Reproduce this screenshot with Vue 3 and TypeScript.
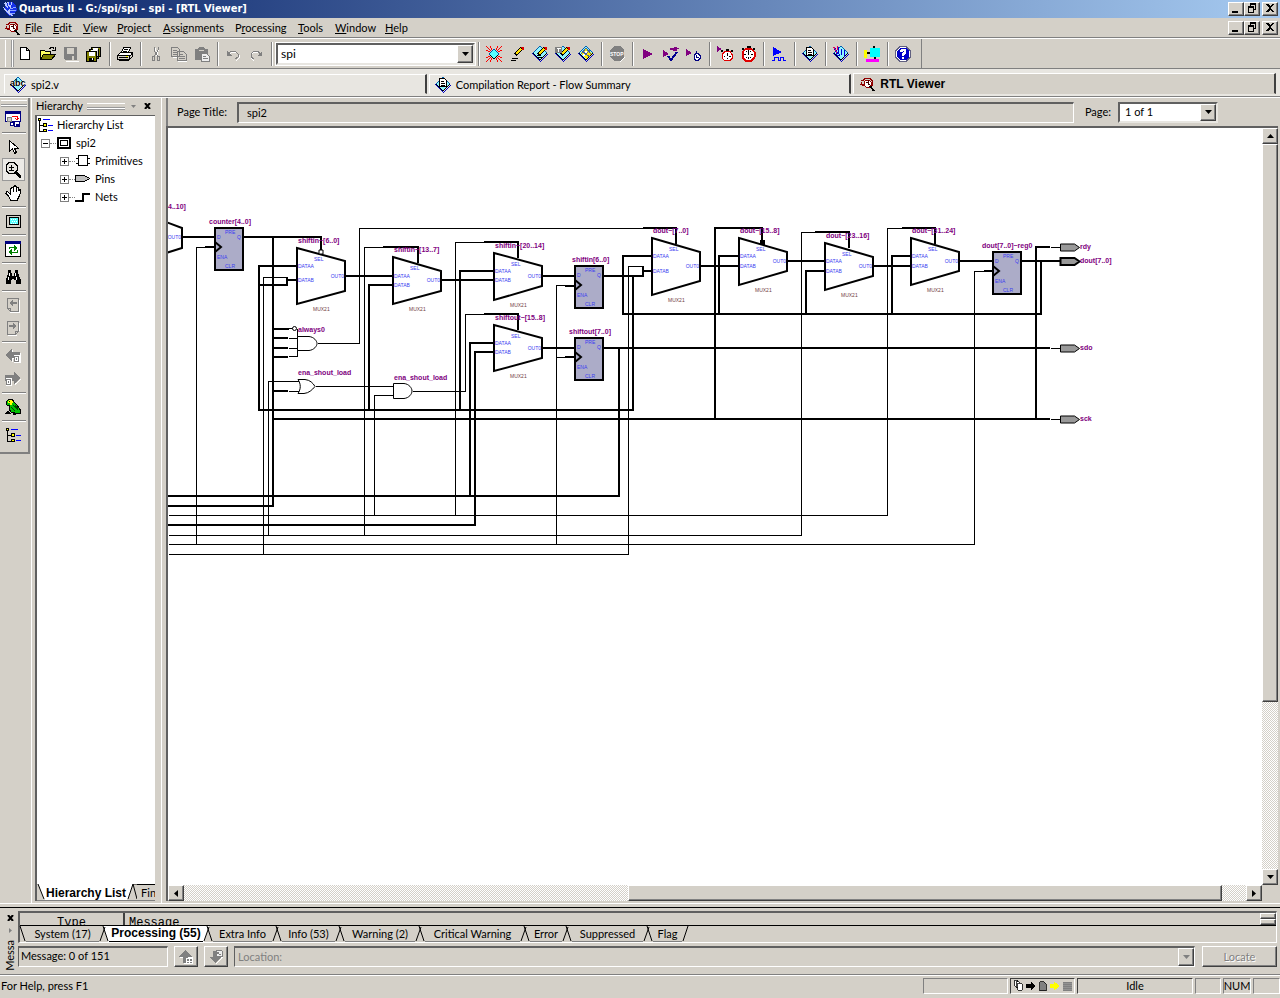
<script setup lang="ts">
import { defineComponent, h, ref } from 'vue'

type Stroke = { d: string; f?: string; s?: string; w?: number }
type Glyph = { t: string; x: number; y: number; z: number; c: string }
type Shape = Stroke | Glyph

const chip: Shape[] = [
  { d: 'M0 8L8 16L16 8V7L8 15L0 7Z', f: '#0000c0' },
  { d: 'M8 0L15 7L8 14L1 7Z', f: '#8ff4ff', s: '#0060b0' },
  { d: 'M1 7L8 14L15 7', s: '#000' },
]
const pencil: Shape[] = [
  { d: 'M6 9L13 2', s: '#000', w: 4 },
  { d: 'M7 8L12 3', s: '#ffe000', w: 2 },
  { d: 'M12 1h3v3h-2v-2h-1z', f: '#e00000' },
]
const stopwatch: Shape[] = [
  { d: 'M7 0h4v2h-4zM2 2h2v2h-2zM13 2h2v2h-2z', f: '#000' },
  { d: 'M6 2.500h5L14.500 6v5L11 15H6L2.500 11V6Z', f: '#fff', s: '#e00000', w: 2 },
  { d: 'M8 4h1v5h-1zM8 11h1v2h-1zM4 8h2v1h-2zM11 8h2v1h-2zM6 5h1v1h-1zM10 5h1v1h-1zM6 11h1v1h-1zM10 11h1v1h-1z', f: '#000' },
]
const lens: Shape[] = [
  { d: 'M2 4.500h2l2-2h5l2.500 2.500v4L11 11H7L5 9H3', s: '#900000' },
  { d: 'M5 6l2-2h3l2 2v3l-2 2H7L5 9z', f: '#fff', s: '#900000' },
  { d: 'M7 6.500h2v2h2M9.500 4v2', s: '#400' },
  { d: 'M11 10l4 5', s: '#000', w: 2 },
  { d: 'M3 6l-1 2h3', s: '#900000' },
]
const treeGlyph: Shape[] = [
  { d: 'M2.500 4v10.500H6M2.500 8.500H6', s: '#000' },
  { d: 'M1.500 1.500h2v2h-2zM6.500 6.500h3v3h-3zM6.500 12.500h3v2h-3z', f: '#ff0', s: '#000' },
  { d: 'M6 2.500h7M11 8.500h5M11 13.500h5', s: '#00f' },
]

const icons: Record<string, Shape[]> = {
  logo: [
    { d: 'M3 2l3-1h4l4 4 1 4-3 4-4 2-3-2-2-6z', f: '#1530e8' },
    { d: 'M2 2l2-1 2 5-1 1zM5 1l2 0 1 5h-1zM9 1l1 0-1 6h-1zM1 6l4 4 3-2v4l3 3-4-1-3-3z', f: '#b9c9ff' },
    { d: 'M8 8l6-2M8 10l6-1M8 12l5 1', s: '#8ea6ff' },
  ],
  lens,
  new: [{ d: 'M3.500 1.500h6l3 3v9h-9zM9.500 1.500v3h3', f: '#fff', s: '#000' }],
  open: [
    { d: 'M.5 13.500v-9h4l1 1h5v3', f: '#ffff60', s: '#000' },
    { d: 'M.5 13.500l3-5h12l-4 5z', f: '#808000', s: '#000' },
    { d: 'M9 2.500h1l1-1h2l1.500 2M12 4h3v-3', s: '#000' },
  ],
  save: [
    { d: 'M3 15h13v-12', s: '#fff' },
    { d: 'M1 1h13v13H2l-1-1z', f: '#808080' },
    { d: 'M4 2h7v6H4zM9 10h2v4H9z', f: '#d4d0c8' },
  ],
  saveall: [
    { d: 'M5.500 1.500h9v9h-9zM3.500 3.500h9v9h-9z', f: '#808000', s: '#000' },
    { d: 'M7 2h5v2H7zM5 4h6v2H5z', f: '#fff' },
    { d: 'M.5 5.500h10v10h-10z', f: '#808000', s: '#000' },
    { d: 'M3 6h6v4H3zM7 12h1v2H7z', f: '#fff' },
    { d: 'M3 12h5v3H3z', f: '#000' },
    { d: 'M6 12h1v2H6z', f: '#fff' },
  ],
  print: [
    { d: 'M4.500 6.500l2-5h7l-2 5z', f: '#fff', s: '#000' },
    { d: 'M7 3.500h4M6 5.500h4', s: '#000' },
    { d: 'M.5 9.500l3-3h12l-2 3z', f: '#fff', s: '#000' },
    { d: 'M.5 9.500h12v4h-12zM12.500 13.500l3-3v-4', f: '#d4d0c8', s: '#000' },
    { d: 'M2 11h9v1H2zM2 14h10v1H2z', f: '#000' },
    { d: 'M9 10h2v1H9z', f: '#ff0' },
  ],
  cut: [
    { d: 'M7 2l3 8M11 2l-3 8', s: '#fff' },
    { d: 'M6 1v3l4 7M10 1v3l-4 7', s: '#808080' },
    { d: 'M4.500 10.500h2v4h-2zM9.500 10.500h2v4h-2z', s: '#808080' },
  ],
  copy: [
    { d: 'M2 11.500h6M16 6v9.500H7', s: '#fff' },
    { d: 'M.5 1.500h6l2 2v7h-8zM6.500 5.500h6l3 3v6h-9z', f: '#d4d0c8', s: '#808080' },
    { d: 'M2 4.500h4M2 6.500h4M2 8.500h4M8 8.500h4M8 10.500h6M8 12.500h6', s: '#808080' },
  ],
  paste: [
    { d: 'M1 3h3l1-2h5l1 2h3v11H1z', f: '#808080' },
    { d: 'M5 4.500h5', s: '#d4d0c8' },
    { d: 'M7.500 7.500h5l3 3v5h-8z', f: '#eee', s: '#808080' },
    { d: 'M9 10.500h3M9 12.500h5', s: '#808080' },
  ],
  undo: [
    { d: 'M4 9l3-3h4l3 3v3l-3 3', s: '#fff' },
    { d: 'M3 8l3-3h4l3 3v3l-3 2', s: '#808080' },
    { d: 'M2 5v5h5z', f: '#808080' },
  ],
  redo: [
    { d: 'M13 9l-3-3H6L3 9v3l3 3', s: '#fff' },
    { d: 'M12 8l-2-3H6L3 8v3l3 2', s: '#808080' },
    { d: 'M14 5v5H9z', f: '#808080' },
  ],
  assign: [
    { d: 'M0 0l5 5M16 0l-5 5M0 16l5-5M16 16l-5-5M0 4l4 2M4 0l2 4M16 4l-4 2M12 0l-2 4M0 12l4-2M4 16l2-4M16 12l-4-2M12 16l-2-4', s: '#f00' },
    { d: 'M8 3l5 5-5 5-5-5z', f: '#5ff', s: '#0050a0' },
    { d: 'M4 9l4 4 4-4', s: '#000' },
  ],
  edit: [...pencil, { d: 'M3 12.500h6M2 14.500h5', s: '#000' }],
  chipedit: [...chip, { d: 'M5 9.500h4M5 11.500h6', s: '#000' }, ...pencil],
  chippin: [...chip, ...pencil, { d: 'M0 1h7v6H0z', f: '#808080' }, { d: 'M2 2h4v1H4v3H3V3H2z', f: '#fff' }],
  floor: [
    ...chip,
    { d: 'M8 2L14 7L8 13L2 7Z', f: '#ffe800' },
    { d: 'M4 5l8 6M6 10l6-6M8 2l5 6M3 8l5-6', s: '#4060a0' },
    { d: 'M7 5h2v2H7zM5 8h2v2H5z', f: '#fff' },
  ],
  stop: [
    { d: 'M6 16h5l5-5V6', s: '#fff' },
    { d: 'M5 0h6l4 4v7l-4 4H5l-4-4V4z', f: '#808080' },
    { t: 'STOP', x: 1, y: 10, z: 5, c: '#fff' },
  ],
  play: [{ d: 'M3 3v10l10-5z', f: '#800080' }],
  playcheck: [
    { d: 'M0 4v7l6-3z', f: '#800080' },
    { d: 'M7 2h4V1h3v4h-4V4H7zM14 2h2v1h-2z', f: '#800080' },
    { d: 'M5 10l3 4 6-8', s: '#000090', w: 2 },
  ],
  playtime: [
    { d: 'M0 3v7l6-3z', f: '#800080' },
    { d: 'M10.500 5v2M10 7.500l-2 2v3l2 2h2l2-2v-3l-2-2z', f: '#fff', s: '#000080' },
    { d: 'M10.500 9v2.500h2', s: '#000080' },
  ],
  timeplay: [
    { d: 'M0 0v6l5-3z', f: '#800080' },
    { d: 'M9 3h3v2H9z', f: '#000' },
    { d: 'M8 5.500h5l2 3v4l-2 2H8l-3-2v-4z', f: '#fff', s: '#e00000' },
    { d: 'M10 7h1v3h-1zM10 12h1v1h-1zM7 10h1v1H7zM12 10h2v1h-2zM4 4h2v2H4zM14 4h2v2h-2z', f: '#000' },
  ],
  stopwatch,
  wave: [
    { d: 'M2 1v9l9-4z', f: '#00f' },
    { d: 'M1 14.500h2.500v-3h4v3h2v-3h3v3H15', s: '#00f' },
  ],
  report: [
    ...chip,
    { d: 'M4.500 1.500h5l2 2v6h-7z', f: '#fff', s: '#000' },
    { d: 'M6 4.500h3M6 6.500h4M6 8.500h4', s: '#000' },
  ],
  program: [...chip, { d: 'M1 1l3 8h3M5 1v6l2 2M8 3v6M11 4v7M2 2l3 6', s: '#0000d0' }, { d: 'M0 1h1l3 6M4 0v4', s: '#e00060' }],
  monitor: [
    { d: 'M6 2h10v9H6z', f: '#0ff' },
    { d: 'M9 0h2v2H9zM10 11h2v2h-2zM3 6h3v2H3z', f: '#000' },
    { d: 'M0 4h3v8H0z', f: '#ff0' },
    { d: 'M2 13h13v3H2z', f: '#f0f' },
  ],
  help: [
    { d: 'M5 .5h6L15.500 5v6L11 15.500H5L.5 11V5z', f: '#fff', s: '#606080' },
    { d: 'M5 2h6l3 3v6l-3 3H5l-3-3V5z', f: '#0000c8' },
    { d: 'M6 6V5h1V4h3v3H9v1H8v2M8 11v2', s: '#fff', w: 2 },
  ],
  abc: [...chip, { d: 'M1 5h14v4H1z', f: '#fff' }, { t: 'abc', x: 0, y: 9, z: 9, c: '#000' }],
  export: [
    { d: 'M.5.500h15v10H.5z', f: '#fff', s: '#000080' },
    { d: 'M0 0h16v3H0z', f: '#000080' },
    { d: 'M2.500 6.500h4v4h-4z', f: '#ccc', s: '#808080' },
    { d: 'M7 5h5v4M10 7l2 2 2-2', s: '#f00' },
    { d: 'M5.500 11.500h3v3h-3zM9.500 10.500h5v5h-5z', f: '#fff', s: '#000080' },
    { d: 'M11 13h3v2h-3z', f: '#000080' },
  ],
  arrow: [{ d: 'M4.500 1.500v11l3-3 2 5 2-1-2-4h4z', f: '#fff', s: '#000' }],
  zoom: [
    { d: 'M4 .5h5l3 3v5l-3 3H4l-3-3v-5z', f: '#e8e6e1', s: '#000' },
    { d: 'M6.500 3v5M4 5.500h5M4 8.500h5', s: '#000' },
    { d: 'M10 10l6 5', s: '#000', w: 3 },
  ],
  hand: [
    { d: 'M5.500 9V3.500l2-1 1 1v-2l2-1 1 2 2 0 0 3 2-1 .5 2-2 5-2 4h-6l-3-5-2-2 1-2z', f: '#fff', s: '#000' },
    { d: 'M8.500 3v4M11.500 3v4', s: '#000' },
  ],
  full: [
    { d: 'M1.500 2.500h14v12h-14z', f: '#d4d0c8', s: '#000' },
    { d: 'M4.500 4.500h9v7h-9z', f: '#5ff', s: '#000' },
    { d: 'M6 6h1v1H6zM8 6h1v1H8zM10 6h1v1h-1zM7 8h1v1H7zM9 8h1v1H9zM11 8h1v1h-1zM6 10h1v1H6zM8 10h1v1H8zM10 10h1v1h-1z', f: '#fff' },
  ],
  refresh: [
    { d: 'M.5.500h15v15H.5z', f: '#fff', s: '#000' },
    { d: 'M0 0h16v3H0z', f: '#000080' },
    { d: 'M4.500 8V6.500H10M12.500 9v2.500H6', s: '#008000' },
    { d: 'M9 4l4 3-4 3zM7 8l-4 3 4 3z', f: '#008000' },
  ],
  binoc: [
    { d: 'M3 1h3v3h1v3h2V4h1V1h3v3l3 7v4h-5v-4H9v-1H7v1H6v4H1v-4l2-7z', f: '#000' },
    { d: 'M4 4h1v3H4zM3 8h1v3H3zM10 4h1v3h-1zM11 8h1v3h-1z', f: '#fff' },
  ],
  prev: [
    { d: 'M5 15.500h9.500V3', s: '#fff' },
    { d: 'M2.500 1.500h11v13h-8l-3-3zM2.500 11.500h3v3', s: '#808080' },
    { d: 'M4 6l4-3v2h4v2H8v2z', f: '#808080' },
  ],
  next: [
    { d: 'M3 15.500h9M14.500 3v8', s: '#fff' },
    { d: 'M2.500 1.500h11v10l-3 3h-8zM13.500 11.500h-3v3', s: '#808080' },
    { d: 'M12 6L8 3v2H4v2h4v2z', f: '#808080' },
  ],
  back: [
    { d: 'M1 8l7-6v3h8v10h-1V11H8v3z', f: '#fff' },
    { d: 'M0 7l7-6v3h8v6H7v3z', f: '#808080' },
    { d: 'M9 7h6v8H9z', f: '#fff' },
    { d: 'M9.500 8.500h4v5h-4z', f: '#fff', s: '#808080' },
    { d: 'M11 10h1v2h-1z', f: '#808080' },
  ],
  fwd: [
    { d: 'M16 8l-6 6v-3', s: '#fff' },
    { d: 'M15 7L9 1v3H0v6h9v3z', f: '#808080' },
    { d: 'M1 7h6v8H1z', f: '#fff' },
    { d: 'M1.500 8.500h4v5h-4z', f: '#fff', s: '#808080' },
    { d: 'M3 10h1v2H3z', f: '#808080' },
  ],
  parrot: [
    { d: 'M2 2l2-2h3l2 3 3 3 2 3 2 3-1 3-2-1-3 0-4-1-2-3V6l-2 0-1-2z', f: '#00c000', s: '#000' },
    { d: 'M3 2l1-1h3l1 2-1 3H5V4H3z', f: '#ff0' },
    { d: 'M8 6l5 5M6 8l4 4M10 6l3 4', s: '#004000' },
    { d: 'M4 2h1v1H4zM0 15l3-4 3 4zM8 14h3v2H8z', f: '#000' },
  ],
  tree: treeGlyph,
  module: [
    { d: 'M2 3h12v10H2z', f: '#fff', s: '#000', w: 2 },
    { d: 'M4.500 5.500h7v5h-7z', f: '#fff', s: '#000' },
  ],
  prim: [
    { d: 'M3.500 2.500h9v10h-9z', f: '#fff', s: '#000' },
    { d: 'M1 5.500h2M1 10.500h2M13 5.500h2M13 10.500h2', s: '#000' },
  ],
  pin: [{ d: 'M.5 4.500h9l5 3-5 3h-9z', f: '#c0c0c0', s: '#000' }],
  net: [{ d: 'M0 12h8V5h7', s: '#000', w: 2 }],
  up: [
    { d: 'M8 2l7 7h-4v6H6V9H2z', f: '#fff' },
    { d: 'M7 1l7 7h-4v6H5V8H1z', f: '#808080' },
    { d: 'M8 9h7v6H8z', f: '#fff' },
    { d: 'M9 10h2v2H9zM12 10h2v2h-2zM9 13h2v1H9zM12 13h2v1h-2z', f: '#808080' },
  ],
  down: [
    { d: 'M8 15l7-7h-4V2', s: '#fff' },
    { d: 'M7 14l6-6h-3V2H5v6H1z', f: '#808080' },
    { d: 'M8 1h5l1 1v5H8z', f: '#eee', s: '#808080' },
    { d: 'M9 3h2v2H9zM11 5h2v1h-2z', f: '#808080' },
  ],
  pages: [
    { d: 'M2.500.500h4v8h-4z', f: '#fff', s: '#000' },
    { d: 'M4.500 2.500h4v8h-4z', f: '#fff', s: '#000' },
    { d: 'M6.500 4.500h4l2 2v7h-6z', f: '#fff', s: '#000' },
  ],
  go: [{ d: 'M1 5h7V2l6 6-6 6v-4H1z', f: '#000' }],
  gosmall: [{ d: 'M1 5h6V2l7 6-7 6v-4H1z', f: '#ff0' }],
  page: [{ d: 'M3.500 2.500h6l3 3v9h-9z', f: '#808080', s: '#000' }],
  part: [{ d: 'M3 3h11v11H3z', f: '#808080' }, { d: 'M2 4.500h13M2 7.500h13M2 10.500h13M2 13h13', s: '#999' }],
  min: [{ d: 'M4 10h6v2H4z', f: '#000' }],
  restore: [{ d: 'M6 2h6v7h-2V8h1V4H7v1H6zM4 5h6v7H4zM5 7v4h4V7z', f: '#000' }],
  close: [{ d: 'M4 3h2l2 2 2-2h2L9 7l3 4h-2L8 9l-2 2H4l3-4z', f: '#000' }],
}

const Icon = defineComponent({
  props: { name: { type: String, required: true } },
  setup(props) {
    return () =>
      h(
        'svg',
        { viewBox: '0 0 16 16', width: 16, height: 16, 'aria-hidden': 'true', 'shape-rendering': 'crispEdges' },
        icons[props.name].map((s) =>
          't' in s
            ? h('text', { x: s.x, y: s.y, fill: s.c, 'font-size': s.z, 'font-weight': 'bold', 'font-family': 'Liberation Sans, sans-serif' }, s.t)
            : h('path', { d: s.d, fill: s.f ?? 'none', stroke: s.s ?? 'none', 'stroke-width': s.w ?? 1, 'fill-rule': 'evenodd' }),
        ),
      )
  },
})

const menus = ['File', 'Edit', 'View', 'Project', 'Assignments', 'Processing', 'Tools', 'Window', 'Help']
const accel: Record<string, number> = { Processing: 1 }
const menuParts = menus.map((m) => {
  const i = accel[m] ?? 0
  return [m.slice(0, i), m[i], m.slice(i + 1)]
})

const fileGroups = [['new', 'open', 'save', 'saveall'], ['print'], ['cut', 'copy', 'paste'], ['undo', 'redo']]
const toolGroups = [
  ['assign', 'edit', 'chipedit', 'chippin', 'floor'],
  ['stop'],
  ['play', 'playcheck', 'playtime'],
  ['timeplay', 'stopwatch'],
  ['wave'],
  ['report'],
  ['program'],
  ['monitor'],
  ['help'],
]
const sideGroups = [['export'], ['arrow', 'zoom', 'hand'], ['full'], ['refresh'], ['binoc'], ['prev', 'next'], ['back', 'fwd'], ['parrot'], ['tree']]

const docs = [
  { icon: 'abc', label: 'spi2.v' },
  { icon: 'report', label: 'Compilation Report - Flow Summary' },
  { icon: 'lens', label: 'RTL Viewer' },
]
const activeDoc = ref(2)
const project = ref('spi')
const pageTitle = ref('spi2')

const branches = [
  { icon: 'prim', label: 'Primitives' },
  { icon: 'pin', label: 'Pins' },
  { icon: 'net', label: 'Nets' },
]

const messageTabs = ['System (17)', 'Processing (55)', 'Extra Info', 'Info (53)', 'Warning (2)', 'Critical Warning', 'Error', 'Suppressed', 'Flag']
const activeMsg = ref(1)

interface Mux { x: number; top: number; bottom: number; r1: number; r2: number; a: number; b: number; out: number; label: string }
const muxes: Mux[] = [
  { x: 297, top: 248, bottom: 304, r1: 261, r2: 291, a: 266, b: 280, out: 276, label: 'shiftin~[6..0]' },
  { x: 393, top: 257, bottom: 304, r1: 271, r2: 291, a: 276, b: 285, out: 280, label: 'shiftin~[13..7]' },
  { x: 494, top: 253, bottom: 300, r1: 266, r2: 286, a: 271, b: 280, out: 276, label: 'shiftin~[20..14]' },
  { x: 494, top: 325, bottom: 371, r1: 338, r2: 358, a: 343, b: 352, out: 348, label: 'shiftout~[15..8]' },
  { x: 652, top: 238, bottom: 295, r1: 252, r2: 281, a: 256, b: 271, out: 266, label: 'dout~[7..0]' },
  { x: 739, top: 238, bottom: 285, r1: 252, r2: 271, a: 256, b: 266, out: 261, label: 'dout~[15..8]' },
  { x: 825, top: 243, bottom: 290, r1: 257, r2: 276, a: 261, b: 271, out: 266, label: 'dout~[23..16]' },
  { x: 911, top: 238, bottom: 285, r1: 252, r2: 271, a: 256, b: 266, out: 261, label: 'dout~[31..24]' },
]
const regs = [
  { x: 215, y: 228, label: 'counter[4..0]', lx: 209 },
  { x: 575, y: 266, label: 'shiftin[6..0]', lx: 572 },
  { x: 575, y: 338, label: 'shiftout[7..0]', lx: 569 },
  { x: 993, y: 252, label: 'dout[7..0]~reg0', lx: 982 },
]
const pins = [
  { y: 247, label: 'rdy', bus: false },
  { y: 261, label: 'dout[7..0]', bus: true },
  { y: 348, label: 'sdo', bus: false },
  { y: 419, label: 'sck', bus: false },
]

const buses = [
  'M182 237H214', 'M243 237H321V252', 'M168 506H273V237', 'M273 419H1050', 'M297 266H259V410H633V276',
  'M259 285H287V277', 'M287 280H297', 'M345 276H393', 'M393 285H369V410', 'M383 247H418V263', 'M441 280H493',
  'M493 271H460V410', 'M484 242H518V258', 'M484 314H518V330', 'M493 343H470V496', 'M493 352H475V525H168',
  'M168 496H619V348', 'M542 276H575', 'M542 348H575', 'M603 276H643V266', 'M643 271H652', 'M603 348H1050',
  'M652 256H623V314H1041V261', 'M739 256H719V314', 'M825 271H806V314', 'M911 256H892V314', 'M700 266H739',
  'M787 261H825', 'M873 266H911', 'M959 261H993', 'M643 228H676V244', 'M715 419V228H762V244', 'M815 232H849V248',
  'M902 228H935V244', 'M1021 261H1060', 'M1050 247H1036V419', 'M273 329H289', 'M272 338H288', 'M273 348H288',
  'M272 357H288', 'M273 391H288', 'M205 247H215', 'M565 286H575', 'M565 357H575', 'M984 271H993',
].join('')
const nets = [
  'M168 544H974V271H984', 'M196 544V247H205', 'M263 554V277H287', 'M168 554H628V266H643', 'M268 535V381H300',
  'M364 535V247H383', 'M168 535H801V232H815', 'M168 515H887V228H902', 'M374 515V395H393', 'M455 515V242H484',
  'M556 544V285H565', 'M556 357H565', 'M288 328H292', 'M288 338H297', 'M288 348H297', 'M288 356H297', 'M297 328V356',
  'M317 343H359V228H643', 'M288 391H300', 'M315 386H393', 'M412 391H465V314H484', 'M1050 247H1060',
  'M1050 348H1060', 'M1050 419H1060',
].join('')
</script>

<template>
  <div class="app">
    <header class="titlebar">
      <Icon name="logo" />
      <h1>Quartus II - G:/spi/spi - spi - [RTL Viewer]</h1>
      <div class="winbtns">
        <button v-for="b in ['min', 'restore', 'close']" :key="b" :class="['raised', b]" :aria-label="b"><Icon :name="b" /></button>
      </div>
    </header>

    <nav class="menubar">
      <Icon name="lens" />
      <div class="menus">
        <button v-for="(m, i) in menuParts" :key="i">{{ m[0] }}<u>{{ m[1] }}</u>{{ m[2] }}</button>
      </div>
      <div class="winbtns">
        <button v-for="b in ['min', 'restore', 'close']" :key="b" :class="['raised', b]" :aria-label="'Document ' + b"><Icon :name="b" /></button>
      </div>
    </nav>

    <div class="toolbar">
      <span class="grip"></span>
      <template v-for="(g, i) in fileGroups" :key="'f' + i">
        <button v-for="n in g" :key="n" class="tool" :aria-label="n"><Icon :name="n" /></button>
        <span class="sep"></span>
      </template>
      <div class="combo project">
        <input v-model="project" aria-label="Project" />
        <button class="raised drop" aria-label="Open project list"><svg viewBox="0 0 7 4" width="7" height="4"><path d="M0 0h7L3.500 4z" /></svg></button>
      </div>
      <template v-for="(g, i) in toolGroups" :key="'t' + i">
        <span class="sep"></span>
        <button v-for="n in g" :key="n" class="tool" :aria-label="n"><Icon :name="n" /></button>
      </template>
      <span class="toolend"></span>
    </div>

    <div class="doctabs" role="tablist">
      <button v-for="(d, i) in docs" :key="d.label" role="tab" :aria-selected="i === activeDoc" :class="{ active: i === activeDoc }" @click="activeDoc = i">
        <Icon :name="d.icon" /><span>{{ d.label }}</span>
      </button>
    </div>

    <main class="workspace">
      <aside class="side">
        <div class="sidebar">
          <span class="hgrip"></span>
          <template v-for="(g, i) in sideGroups" :key="i">
            <span v-if="i" class="hsep"></span>
            <button v-for="n in g" :key="n" class="tool" :class="{ pressed: n === 'zoom' }" :aria-label="n"><Icon :name="n" /></button>
          </template>
        </div>
      </aside>

      <section class="hierarchy">
        <div class="panehead">
          <h2>Hierarchy</h2>
          <span class="lines"></span>
          <button aria-label="Pane menu"><svg viewBox="0 0 5 3" width="5" height="3"><path d="M0 0h5L2.500 3z" fill="#808080" /></svg></button>
          <button aria-label="Close pane"><svg viewBox="0 0 7 6" width="7" height="6"><path d="M1 0l5 6M6 0L1 6" stroke="#000" stroke-width="2" /></svg></button>
        </div>
        <div class="treebox">
          <ul class="tree">
            <li><Icon name="tree" /><span>Hierarchy List</span></li>
            <li class="l1"><button class="exp" aria-label="Collapse"></button><b class="dots"></b><Icon name="module" /><span>spi2</span></li>
            <li v-for="b in branches" :key="b.label" class="l2">
              <button class="exp plus" :aria-label="'Expand ' + b.label"></button><b class="dots"></b><Icon :name="b.icon" /><span>{{ b.label }}</span>
            </li>
          </ul>
          <div class="panetabs">
            <svg width="8" height="16" viewBox="0 0 8 16"><path d="M1 0L7 15H8V0z" fill="#fff" /><path d="M1 0L7 15" stroke="#000" fill="none" /></svg>
            <button class="on">Hierarchy List</button>
            <svg width="10" height="16" viewBox="0 0 10 16"><path d="M0 0H6L1 15H0z" fill="#fff" /><path d="M1 15L6 0H10M6 0L10 15" stroke="#000" fill="none" /></svg>
            <button>Find</button>
          </div>
        </div>
      </section>

      <section class="viewer">
        <div class="pagebar">
          <label for="pt">Page Title:</label>
          <input id="pt" v-model="pageTitle" readonly />
          <label for="pg">Page:</label>
          <div class="select">
            <select id="pg"><option>1 of 1</option></select>
            <span class="raised drop"><svg viewBox="0 0 7 4" width="7" height="4"><path d="M0 0h7L3.500 4z" /></svg></span>
          </div>
        </div>
        <div class="canvasbox">
          <div class="canvas">
            <svg class="schematic" viewBox="168 128 1094 757" width="1094" height="757" role="img" aria-label="RTL schematic of spi2">
              <g fill="none" stroke="#000" shape-rendering="crispEdges">
                <path :d="buses" stroke-width="2" />
                <path :d="nets" transform="translate(.5 .5)" />
              </g>
              <g fill="#fff" stroke="#000" stroke-width="2">
                <path d="M166 222L182 228V248L166 253" />
                <path v-for="m in muxes" :key="m.label" :d="`M${m.x} ${m.top}L${m.x + 48} ${m.r1}V${m.r2}L${m.x} ${m.bottom}Z`" />
              </g>
              <g fill="#fff" stroke="#000">
                <path d="M297.500 336.500H309C314 337 317 341 317 343.500S314 350 309 350.500H297.500Z" />
                <path d="M393.500 383.500H404C409 384 412 388 412 391S409 398 404 398.500H393.500Z" />
                <path d="M298 379.500H305C310 380 313 383 315 386.500C312 390 309 393 304 393.500H298C301 389 301 384 298 379.500Z" />
                <circle cx="294.500" cy="328.500" r="2" />
                <path d="M319 250h4v4h-4z" />
              </g>
              <path d="M760 240h5v5h-5z" />
              <g v-for="r in regs" :key="r.label">
                <rect :x="r.x" :y="r.y" width="28" height="42" fill="#acacc8" stroke="#000" stroke-width="2" shape-rendering="crispEdges" />
                <path :d="`M${r.x} ${r.y + 14}l6 5-6 5`" fill="none" stroke="#000" stroke-width="2" />
                <g class="port">
                  <text :x="r.x + 10" :y="r.y + 6">PRE</text>
                  <text :x="r.x + 2" :y="r.y + 11">D</text>
                  <text :x="r.x + 22" :y="r.y + 11">Q</text>
                  <text :x="r.x + 2" :y="r.y + 31">ENA</text>
                  <text :x="r.x + 10" :y="r.y + 40">CLR</text>
                </g>
                <text class="name" :x="r.lx" :y="r.y - 4">{{ r.label }}</text>
              </g>
              <g v-for="m in muxes" :key="m.label">
                <g class="port">
                  <text :x="m.x + 17" :y="m.top + 13">SEL</text>
                  <text :x="m.x + 1" :y="m.a + 2">DATAA</text>
                  <text :x="m.x + 1" :y="m.b + 2">DATAB</text>
                  <text :x="m.x + 47" :y="m.out + 2" text-anchor="end">OUT0</text>
                </g>
                <text class="kind" :x="m.x + 16" :y="m.bottom + 7">MUX21</text>
                <text class="name" :x="m.x + 1" :y="m.top - 5">{{ m.label }}</text>
              </g>
              <text class="port" x="181" y="239" text-anchor="end">OUT0</text>
              <text class="name" x="168" y="209">4..10]</text>
              <text class="name" x="298" y="332">always0</text>
              <text class="name" x="298" y="375">ena_shout_load</text>
              <text class="name" x="394" y="380">ena_shout_load</text>
              <g v-for="p in pins" :key="p.label">
                <path :d="`M1060.500 ${p.y - 3}h14l5 3.500-5 3.500h-14z`" fill="#999" stroke="#000" :stroke-width="p.bus ? 2 : 1" />
                <text class="name" x="1080" :y="p.y + 2">{{ p.label }}</text>
              </g>
            </svg>
          </div>
          <div class="vscroll" aria-hidden="true">
            <span class="raised sb"><svg viewBox="0 0 7 4" width="7" height="4"><path d="M0 4h7L3.500 0z" /></svg></span>
            <span class="raised vthumb"></span>
            <span class="vrest"></span>
            <span class="raised sb"><svg viewBox="0 0 7 4" width="7" height="4"><path d="M0 0h7L3.500 4z" /></svg></span>
          </div>
          <div class="hscroll" aria-hidden="true">
            <span class="raised sb"><svg viewBox="0 0 4 7" width="4" height="7"><path d="M4 0v7L0 3.500z" /></svg></span>
            <span class="hlead"></span>
            <span class="raised hthumb"></span>
            <span class="hrest"></span>
            <span class="raised sb"><svg viewBox="0 0 4 7" width="4" height="7"><path d="M0 0v7l4-3.500z" /></svg></span>
          </div>
        </div>
      </section>
    </main>

    <section class="messages">
      <div class="msgside">
        <button aria-label="Close messages"><svg viewBox="0 0 7 6" width="7" height="6"><path d="M1 0l5 6M6 0L1 6" stroke="#000" stroke-width="2" /></svg></button>
        <svg viewBox="0 0 3 5" width="3" height="5"><path d="M0 0v5l3-2.500z" fill="#808080" /></svg>
        <span class="vert">Messa</span>
      </div>
      <div class="msgmain">
        <div class="msgbox">
          <div class="msghead">
            <span class="type">Type</span><span class="msg">Message</span>
            <span class="spin"><i class="raised"></i><i class="raised"></i></span>
          </div>
          <div class="msgtabs" role="tablist">
            <template v-for="(t, i) in messageTabs" :key="t">
              <svg width="10" height="16" viewBox="0 0 10 16" aria-hidden="true">
                <path v-if="i === activeMsg" d="M4 0L9 16H10V0z" fill="#fff" />
                <path v-if="i === activeMsg + 1" d="M0 0H6L1 16H0z" fill="#fff" />
                <path v-if="i" d="M1 15L6 1" stroke="#000" fill="none" />
                <path d="M4 0L9 15" stroke="#000" fill="none" />
              </svg>
              <button role="tab" :aria-selected="i === activeMsg" :class="{ on: i === activeMsg }" @click="activeMsg = i">{{ t }}</button>
            </template>
            <svg width="10" height="16" viewBox="0 0 10 16" aria-hidden="true"><path d="M1 15L6 0" stroke="#000" fill="none" /></svg>
          </div>
        </div>
        <div class="msgrow">
          <output class="count">Message: 0 of 151</output>
          <button class="raised nav" disabled aria-label="Previous message"><Icon name="up" /></button>
          <button class="raised nav" disabled aria-label="Next message"><Icon name="down" /></button>
          <div class="combo location">
            <input disabled value="Location:" aria-label="Location" />
            <button class="raised drop" disabled aria-label="Open location list"><svg viewBox="0 0 7 4" width="7" height="4"><path d="M0 0h7L3.500 4z" fill="#808080" /></svg></button>
          </div>
          <button class="raised locate" disabled>Locate</button>
        </div>
      </div>
    </section>

    <footer class="status">
      <span class="helptext">For Help, press F1</span>
      <span class="pane p1"></span>
      <span class="pane p2"><Icon name="pages" /><Icon name="go" /><Icon name="page" /><Icon name="gosmall" /><Icon name="part" /></span>
      <span class="pane p3">Idle</span>
      <span class="pane p4"></span>
      <span class="pane p5">NUM</span>
      <span class="pane p6"></span>
    </footer>
  </div>
</template>

<style>
body { margin: 0; background: #d4d0c8; }
</style>

<style scoped>
.app {
  --face: #d4d0c8;
  height: 100vh;
  overflow: hidden;
  display: flex;
  flex-direction: column;
  background: var(--face);
  color: #000;
  font: 11px/14px Lato, "Liberation Sans", sans-serif;
}
.app * { box-sizing: border-box; }
button, input, select { font: inherit; color: inherit; background: none; border: 0; padding: 0; margin: 0; border-radius: 0; }
svg { display: block; flex: none; }
h1, h2, ul { margin: 0; padding: 0; font: inherit; list-style: none; }
.raised {
  background: var(--face);
  border: 1px solid;
  border-color: #fff #404040 #404040 #fff;
  box-shadow: inset -1px -1px #808080;
  display: flex;
  align-items: center;
  justify-content: center;
}

.titlebar { flex: none; height: 18px; display: flex; align-items: center; gap: 1px; padding: 0 2px; background: linear-gradient(90deg, #0a246a, #a6caf0); color: #fff; }
.titlebar h1 { flex: 1; font: bold 11px/16px "DejaVu Sans Condensed", "DejaVu Sans", sans-serif; white-space: nowrap; }
.winbtns { display: flex; flex: none; }
.winbtns button { width: 16px; height: 14px; overflow: hidden; }
.winbtns .close { margin-left: 2px; }
.menubar { flex: none; height: 20px; display: flex; align-items: center; padding: 0 2px 0 4px; border-bottom: 1px solid #808080; }
.menus { flex: 1; display: grid; grid-template-columns: 28px 30px 34px 46px 72px 63px 37px 50px 34px; padding-left: 5px; }
.menus button { text-align: left; white-space: nowrap; }

.toolbar { flex: none; height: 31px; display: flex; align-items: center; border-top: 1px solid #fff; border-bottom: 1px solid #808080; }
.grip { width: 8px; height: 27px; margin: 0 1px 0 5px; border: solid #fff; border-width: 0 1px 0 1px; box-shadow: inset -1px 0 #999, 1px 0 #999; }
.tool { width: 23px; height: 23px; padding: 4px 4px 3px 3px; display: flex; flex: none; }
.sep { width: 2px; height: 24px; margin: 0 3px; background: linear-gradient(90deg, #808080 50%, #fff 50%); flex: none; }
.toolend { align-self: stretch; width: 1px; margin-left: 6px; background: #808080; }
.combo { display: flex; background: #fff; border: 2px solid; border-color: #606060 #e8e6e1 #e8e6e1 #606060; }
.combo input { flex: 1; min-width: 0; padding: 0 3px; }
.project { width: 199px; height: 22px; font-size: 12px; outline: 1px solid #fff; }
.drop { width: 16px; flex: none; }

.doctabs { flex: none; height: 28px; display: grid; grid-template-columns: repeat(3, 1fr); gap: 2px; padding: 4px 4px 2px; background: #e8e6e1; border-bottom: 1px solid #808080; }
.doctabs button { display: flex; align-items: center; gap: 5px; padding: 2px 5px 0; margin-top: 1px; border: 1px solid; border-color: #fff #404040 transparent #fff; border-right-width: 2px; text-align: left; }
.doctabs .active { background: var(--face); margin-top: 0; padding-top: 0; font: bold 12px/14px "Liberation Sans", sans-serif; }

.workspace { flex: 1; min-height: 0; display: flex; border-top: 1px solid #fff; }
.side { width: 31px; flex: none; }
.sidebar { display: flex; flex-direction: column; align-items: center; padding: 2px 1px 6px 0; width: 30px; border: solid #808080; border-width: 0 2px 2px 0; }
.hgrip { height: 6px; width: 26px; margin-bottom: 1px; border: solid #fff; border-width: 1px 0; box-shadow: inset 0 -1px #999, 0 1px #999; }
.hsep { height: 2px; width: 24px; margin: 2px 0 1px; background: linear-gradient(#808080 50%, #fff 50%); }
.pressed { background: #eceae6; outline: 1px solid #999; outline-offset: -1px; }

.hierarchy { width: 125px; flex: none; display: flex; flex-direction: column; border-left: 1px solid #fff; }
.panehead { height: 17px; flex: none; display: flex; align-items: center; gap: 4px; padding: 0 3px 1px 4px; }
.panehead button { display: flex; padding: 2px; }
.lines { flex: 1; height: 6px; border: solid #fff; border-width: 1px 0; box-shadow: 0 1px #999, inset 0 -1px #999; }
.treebox { flex: 1; min-height: 0; margin: 0 1px 2px 3px; display: flex; flex-direction: column; background: #fff; border: solid #606060; border-width: 1px 0 0 2px; overflow: hidden; }
.tree { flex: 1; }
.tree li { height: 18px; display: flex; align-items: center; white-space: nowrap; }
.tree li > span { padding-left: 4px; }
.tree .l1 { padding-left: 4px; }
.tree .l2 { padding-left: 23px; }
.exp { width: 9px; height: 9px; border: 1px solid #808080; flex: none; background: linear-gradient(#000, #000) center / 5px 1px no-repeat; }
.plus { background: linear-gradient(#000, #000) center / 5px 1px no-repeat, linear-gradient(#000, #000) center / 1px 5px no-repeat; }
.dots { width: 6px; border-top: 1px dotted #808080; }
.panetabs { height: 17px; flex: none; display: flex; background: var(--face); border-bottom: 1px solid #808080; white-space: nowrap; }
.panetabs button { padding: 0 4px; flex: none; border-top: 1px solid #000; }
.panetabs .on { padding: 1px 1px 0; background: #fff; border: 0; font: bold 12px/14px "Liberation Sans", sans-serif; }

.viewer { flex: 1; min-width: 0; margin-left: 5px; display: flex; flex-direction: column; border-left: 1px solid #fff; padding: 0 2px 0 4px; }
.pagebar { height: 28px; flex: none; display: flex; align-items: center; padding: 0 60px 0 9px; border-left: 2px solid #808080; }
.pagebar input { flex: 1; min-width: 0; height: 21px; margin: 0 11px 0 10px; padding: 0 8px; border: 1px solid; border-color: #606060 #fff #fff #606060; border-left-width: 2px; border-top-width: 2px; }
.select { display: grid; width: 100px; height: 21px; margin-left: 7px; background: #fff; border: 2px solid; border-color: #606060 #e8e6e1 #e8e6e1 #606060; }
.select > * { grid-area: 1 / 1; }
.select select { appearance: none; padding-left: 5px; }
.select .drop { justify-self: end; pointer-events: none; }
.canvasbox { flex: 1; min-height: 0; margin-bottom: 2px; display: grid; grid-template: minmax(0, 1fr) 16px / minmax(0, 1fr) 16px; border: solid #606060; border-width: 2px 0 0 2px; }
.canvas { background: #fff; overflow: hidden; }
.vscroll { display: flex; flex-direction: column; }
.hscroll { display: flex; }
.vscroll, .hscroll { background: repeating-conic-gradient(#fff 0 25%, #d4d0c8 0 50%) 0 0 / 2px 2px; }
.sb { width: 16px; height: 16px; flex: none; }
.vthumb { flex: 558; }
.vrest { flex: 168; }
.hlead { flex: 445; }
.hthumb { flex: 593; }
.hrest { flex: 24; }
.name { font: bold 7px "Liberation Sans", sans-serif; fill: #800080; }
.port { font: 5px "Liberation Sans", sans-serif; fill: #3c3cf0; }
.kind { font: 5px "Liberation Sans", sans-serif; fill: #704040; }

.messages { flex: none; height: 71px; display: flex; border-top: 1px solid #fff; box-shadow: inset 0 3px var(--face), inset 0 4px #000; padding-top: 7px; }
.msgside { width: 18px; flex: none; display: flex; flex-direction: column; align-items: center; gap: 7px; padding: 4px 0 0 2px; }
.msgside button { display: flex; }
.vert { writing-mode: vertical-rl; transform: rotate(180deg); }
.msgmain { flex: 1; min-width: 0; display: flex; flex-direction: column; gap: 3px; padding-right: 3px; }
.msgbox { height: 32px; flex: none; border: 1px solid; border-color: #606060 #fff #fff #606060; border-top-width: 2px; border-left-width: 2px; }
.msghead { height: 13px; overflow: hidden; display: flex; font: 12px/20px "Liberation Mono", monospace; border-bottom: 1px solid #000; }
.type { width: 105px; text-align: center; border-right: 2px solid #404040; }
.msg { flex: 1; padding-left: 4px; }
.spin { width: 16px; display: flex; flex-direction: column; }
.spin i { height: 6px; }
.msgtabs { display: grid; grid-template-columns: 10px 73px 10px 94px 10px 59px 10px 53px 10px 70px 10px 95px 10px 32px 10px 71px 10px 29px 10px; height: 16px; margin-left: -4px; }
.msgtabs button { line-height: 15px; border-bottom: 1px solid #808080; white-space: nowrap; text-align: center; }
.msgtabs .on { background: #fff; border-color: #000; font: bold 12px/15px "Liberation Sans", sans-serif; }
.msgrow { display: flex; height: 21px; }
.count { width: 150px; padding: 1px 2px; border: 1px solid; border-color: #606060 #fff #fff #606060; border-top-width: 2px; }
.nav { width: 24px; margin-left: 6px; }
.location { flex: 1; margin: 0 7px 0 6px; background: var(--face); color: #808080; border-width: 1px; border-color: #606060 #fff #fff #606060; border-top-width: 2px; }
.locate { width: 75px; color: #808080; text-shadow: 1px 1px #fff; }

.status { flex: none; height: 24px; display: flex; border-top: 1px solid #808080; box-shadow: inset 0 1px #fff; padding: 3px 0 4px; gap: 2px; }
.helptext { flex: 1; padding: 1px; }
.pane { border: 1px solid; border-color: #808080 #fff #fff #808080; display: flex; align-items: center; justify-content: center; }
.p1 { width: 85px; }
.p2 { width: 65px; border-color: #404040 #fff #fff #404040; }
.p2 svg { width: 12px; height: 14px; }
.p3 { width: 116px; border-color: #404040 #fff #fff #404040; }
.p4 { width: 26px; }
.p5 { width: 28px; }
.p6 { width: 27px; }
</style>
